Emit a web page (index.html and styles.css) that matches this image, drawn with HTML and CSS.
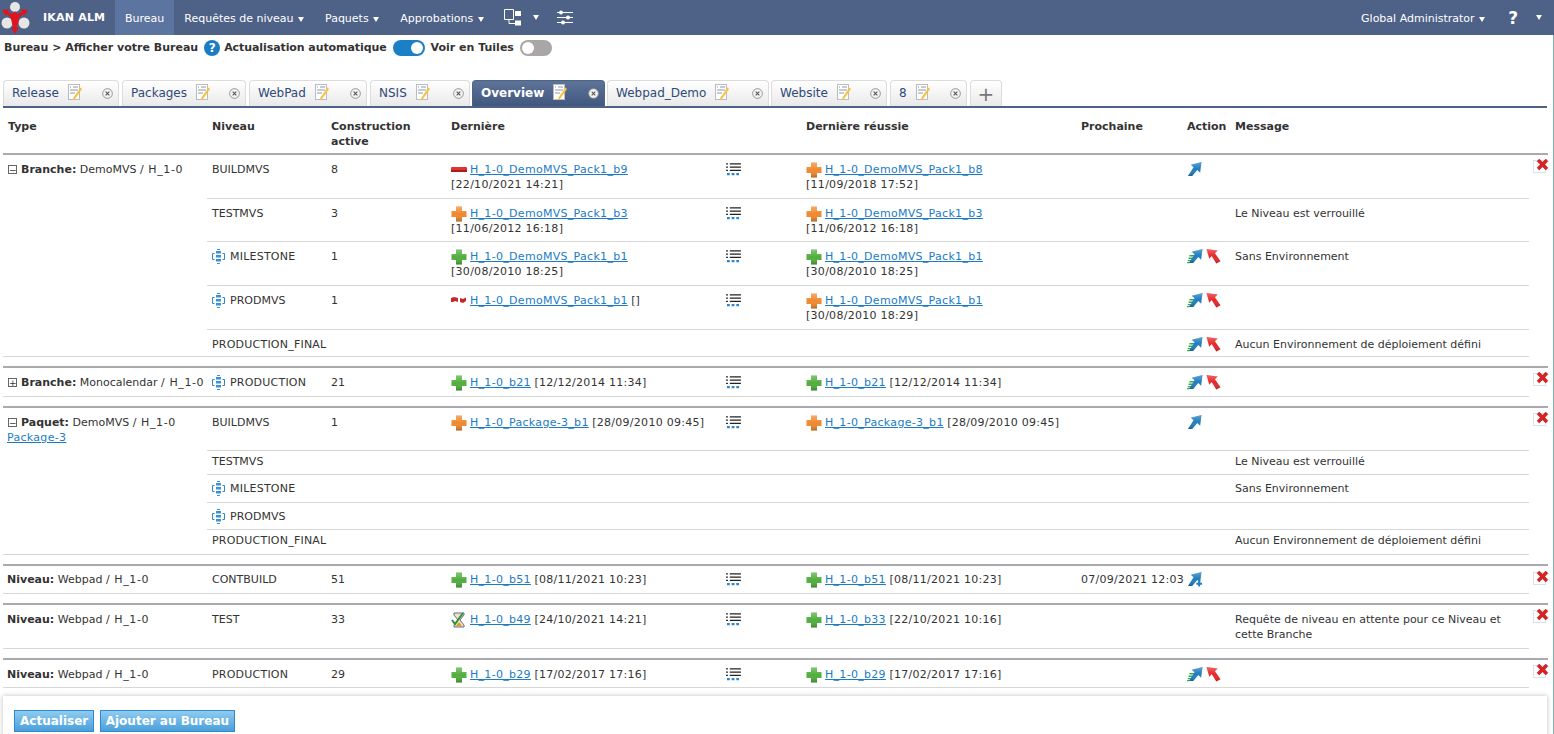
FILE: index.html
```html
<!DOCTYPE html>
<html lang="fr">
<head>
    <meta charset="UTF-8">
    <title>IKAN ALM - Bureau</title>
    <link rel="stylesheet" href="styles.css">
</head>
<body>

<svg class="defs" width="0" height="0">
    <defs>
        <linearGradient id="shade" x1="0" y1="0" x2="0" y2="1">
            <stop offset="0" stop-color="#fff" stop-opacity=".3"/>
            <stop offset=".5" stop-color="#fff" stop-opacity="0"/>
            <stop offset="1" stop-color="#000" stop-opacity=".25"/>
        </linearGradient>
    </defs>
    <symbol id="i-plus" viewBox="0 0 16 16"><path d="M5 .5h6V5h4.500v6H11v4.500H5V11H.5V5H5z" fill="currentColor"/><path d="M5 .5h6V5h4.500v6H11v4.500H5V11H.5V5H5z" fill="url(#shade)"/></symbol>
    <symbol id="i-minus" viewBox="0 0 16 16"><rect x="0" y="5" width="16" height="5" rx="1" fill="#e23232"/><rect x="0" y="8" width="16" height="2" fill="#a81c1c"/></symbol>
    <symbol id="i-broken" viewBox="0 0 16 16"><path d="M0 5l3-1 4 1v4l-3-1-2 1H0z" fill="#c62828"/><path d="M9 5l3 1 3-1.500V8l-3 2-3-1z" fill="#c62828"/></symbol>
    <symbol id="i-wait" viewBox="0 0 16 16"><path d="M3 1h10v2L9 8l4 5v2H3v-2l4-5-4-5z" fill="#f4e2bd" stroke="#5f7190"/><path d="M5 14l3-4 3 4z" fill="#e39a2c"/><path d="M1 8l3 4 8-11" fill="none" stroke="#2f8f3a" stroke-width="2"/></symbol>
    <symbol id="i-log" viewBox="0 0 16 14"><path d="M0 1h2M4 1h12M0 4.500h2M4 4.500h12M0 8h2M4 8h12" stroke="#222" stroke-width="1.400"/><path d="M1 12h3M6 12h3M11 12h3" stroke="#2d86c9" stroke-width="2.600"/></symbol>
    <symbol id="i-up" viewBox="0 0 16 16"><path d="M15.500 .5L14 12l-3-3-5.500 6.500H1L7 6 4 3.500z" fill="#1f7cc0"/><path d="M15.500 .5L14 12l-3-3-5.500 6.500H1L7 6 4 3.500z" fill="url(#shade)"/></symbol>
    <symbol id="i-up-plan" viewBox="0 0 16 16"><path d="M15.500 .5L14 12l-3-3-5.500 6.500H1L7 6 4 3.500z" fill="#1f7cc0"/><path d="M15.500 .5L14 12l-3-3-5.500 6.500H1L7 6 4 3.500z" fill="url(#shade)"/><path d="M10 13h6M13 10v6" stroke="#1f7cc0" stroke-width="2"/></symbol>
    <symbol id="i-down" viewBox="0 0 16 16"><path d="M.5 .5l12 1.500-3 3 6 8.500-4.500 2.500L6 8 3.500 11z" fill="#e82626"/><path d="M.5 .5l12 1.500-3 3 6 8.500-4.500 2.500L6 8 3.500 11z" fill="url(#shade)"/></symbol>
    <symbol id="i-fast" viewBox="0 0 10 10"><path d="M3 1h7M2 4h6M1 7h4M0 9.500h3" stroke="#2fb04a" stroke-width="1.700"/></symbol>
    <symbol id="i-milestone" viewBox="0 0 13 15"><path d="M2.500 4.500H.5v6h2M10.500 4.500h2v6h-2" fill="none" stroke="#2d86c9"/><path d="M5 0h3v1h-3zM4 2h5v2.500H4zM4 6h5v2.500H4zM4 10h5v2.500H4zM5 14h3v1H5z" fill="#3b93d6"/></symbol>
    <symbol id="i-note" viewBox="0 0 15 17"><rect x=".5" y=".5" width="11" height="15" fill="#fff" stroke="#b9bdc2"/><path d="M2 3h1M5 3h5M2 6h8M2 9h5" stroke="#8c98a6"/><path d="M14 5L7 15l-2 1 .5-2.500 7-10z" fill="#f5c242"/></symbol>
    <symbol id="i-close" viewBox="0 0 12 12"><circle cx="6" cy="6" r="5.300" fill="#f4f4f4" stroke="#8d8d8d"/><path d="M4 4l4 4M8 4l-4 4" stroke="#555" stroke-width="1.200"/></symbol>
    <symbol id="i-del" viewBox="0 0 12 12"><path d="M1 3l2-2 3 3 3-3 2 2-3 3 3 3-2 2-3-3-3 3-2-2 3-3z" fill="#dd2020" stroke="#a81818" stroke-width=".5"/></symbol>
</svg>

<header class="topbar">
    <a class="brand">
        <svg class="logo" viewBox="0 0 30 35" width="30" height="35">
            <circle cx="15" cy="7" r="5" fill="#e6e6e6"/>
            <circle cx="7" cy="23" r="5.500" fill="#e6e6e6"/>
            <circle cx="24" cy="23" r="5.500" fill="#e6e6e6"/>
            <path d="M2 10l7-.5-1 2.500 5 2 2-3 2 3 5-2-1-2.500 7 .5-4 6-1-2-4 4-1 6-2 3h3l-4 7-4-7h3l-2-3-1-6-4-4-1 2z" fill="#e0141c"/>
        </svg>
        <b>IKAN ALM</b>
    </a>
    <a class="nav-item active">Bureau</a>
    <a class="nav-item">Requêtes de niveau <i class="caret"></i></a>
    <a class="nav-item">Paquets <i class="caret"></i></a>
    <a class="nav-item">Approbations <i class="caret"></i></a>
    <svg class="nav-icon" viewBox="0 0 18 17" width="18" height="17"><path d="M.5.500h9v10h-9zM5 10.500v4h6" fill="none" stroke="#fff"/><path d="M11 2h6v5h-6zM11 11.500h6v5h-6z" fill="#fff"/></svg>
    <i class="caret caret-alone"></i>
    <svg class="nav-icon sliders" viewBox="0 0 16 15" width="16" height="15"><path d="M0 2.500h16M0 7.500h16M0 12.500h16" stroke="#fff"/><circle cx="4" cy="2.500" r="2" fill="#fff"/><circle cx="11" cy="7.500" r="2" fill="#fff"/><circle cx="6" cy="12.500" r="2" fill="#fff"/></svg>
    <span class="spacer"></span>
    <a class="nav-item user">Global Administrator <i class="caret"></i></a>
    <b class="help-mark">?</b>
    <i class="caret caret-end"></i>
</header>

<main class="page">
    <div class="crumbs">
        <b>Bureau &gt; Afficher votre Bureau</b>
        <span class="help-dot">?</span>
        <b class="auto">Actualisation automatique</b>
        <span class="toggle on"></span>
        <b>Voir en Tuiles</b>
        <span class="toggle"></span>
    </div>

    <ul class="tabs">
        <li class="tab t-release">Release<svg class="note"><use href="#i-note"/></svg><svg class="x"><use href="#i-close"/></svg></li>
        <li class="tab t-packages">Packages<svg class="note"><use href="#i-note"/></svg><svg class="x"><use href="#i-close"/></svg></li>
        <li class="tab t-webpad">WebPad<svg class="note"><use href="#i-note"/></svg><svg class="x"><use href="#i-close"/></svg></li>
        <li class="tab t-nsis">NSIS<svg class="note"><use href="#i-note"/></svg><svg class="x"><use href="#i-close"/></svg></li>
        <li class="tab current t-overview">Overview<svg class="note"><use href="#i-note"/></svg><svg class="x"><use href="#i-close"/></svg></li>
        <li class="tab t-demo">Webpad_Demo<svg class="note"><use href="#i-note"/></svg><svg class="x"><use href="#i-close"/></svg></li>
        <li class="tab t-website">Website<svg class="note"><use href="#i-note"/></svg><svg class="x"><use href="#i-close"/></svg></li>
        <li class="tab t-eight">8<svg class="note"><use href="#i-note"/></svg><svg class="x"><use href="#i-close"/></svg></li>
        <li class="tab add">+</li>
    </ul>

    <table class="desk">
        <colgroup>
            <col class="c-type"><col class="c-level"><col class="c-build"><col class="c-last"><col class="c-log"><col class="c-ok"><col class="c-next"><col class="c-action"><col class="c-msg"><col class="c-del">
        </colgroup>
        <thead>
            <tr>
                <th>Type</th><th>Niveau</th><th>Construction<br>active</th><th>Dernière</th><th></th><th>Dernière réussie</th><th>Prochaine</th><th>Action</th><th>Message</th><th></th>
            </tr>
        </thead>

        <tbody class="group">
            <tr class="h44">
                <td class="type" rowspan="5"><span class="tree">−</span><b>Branche:</b> DemoMVS <span class="ver">/ H_1-0</span></td>
                <td>BUILDMVS</td><td>8</td>
                <td><svg class="st"><use href="#i-minus"/></svg><a>H_1-0_DemoMVS_Pack1_b9</a><br><span class="date">[22/10/2021 14:21]</span></td>
                <td><svg class="log"><use href="#i-log"/></svg></td>
                <td><svg class="st orange"><use href="#i-plus"/></svg><a>H_1-0_DemoMVS_Pack1_b8</a><br><span class="date">[11/09/2018 17:52]</span></td>
                <td></td>
                <td><svg class="act"><use href="#i-up"/></svg></td>
                <td></td>
                <td class="del" rowspan="5"><span class="del-box"><svg><use href="#i-del"/></svg></span></td>
            </tr>
            <tr class="h43">
                <td>TESTMVS</td><td>3</td>
                <td><svg class="st orange"><use href="#i-plus"/></svg><a>H_1-0_DemoMVS_Pack1_b3</a><br><span class="date">[11/06/2012 16:18]</span></td>
                <td><svg class="log"><use href="#i-log"/></svg></td>
                <td><svg class="st orange"><use href="#i-plus"/></svg><a>H_1-0_DemoMVS_Pack1_b3</a><br><span class="date">[11/06/2012 16:18]</span></td>
                <td></td><td></td>
                <td>Le Niveau est verrouillé</td>
            </tr>
            <tr class="h44">
                <td><svg class="ms"><use href="#i-milestone"/></svg><span class="wide">MILESTONE</span></td><td>1</td>
                <td><svg class="st green"><use href="#i-plus"/></svg><a>H_1-0_DemoMVS_Pack1_b1</a><br><span class="date">[30/08/2010 18:25]</span></td>
                <td><svg class="log"><use href="#i-log"/></svg></td>
                <td><svg class="st green"><use href="#i-plus"/></svg><a>H_1-0_DemoMVS_Pack1_b1</a><br><span class="date">[30/08/2010 18:25]</span></td>
                <td></td>
                <td><svg class="fast"><use href="#i-fast"/></svg><svg class="act"><use href="#i-up"/></svg><svg class="act"><use href="#i-down"/></svg></td>
                <td>Sans Environnement</td>
            </tr>
            <tr class="h44">
                <td><svg class="ms"><use href="#i-milestone"/></svg>PRODMVS</td><td>1</td>
                <td><svg class="st"><use href="#i-broken"/></svg><a>H_1-0_DemoMVS_Pack1_b1</a> []</td>
                <td><svg class="log"><use href="#i-log"/></svg></td>
                <td><svg class="st orange"><use href="#i-plus"/></svg><a>H_1-0_DemoMVS_Pack1_b1</a><br><span class="date">[30/08/2010 18:29]</span></td>
                <td></td>
                <td><svg class="fast"><use href="#i-fast"/></svg><svg class="act"><use href="#i-up"/></svg><svg class="act"><use href="#i-down"/></svg></td>
                <td></td>
            </tr>
            <tr class="h27">
                <td><span class="wide">PRODUCTION_FINAL</span></td><td></td><td></td><td></td><td></td><td></td>
                <td><svg class="fast"><use href="#i-fast"/></svg><svg class="act"><use href="#i-up"/></svg><svg class="act"><use href="#i-down"/></svg></td>
                <td>Aucun Environnement de déploiement défini</td>
            </tr>
        </tbody>

        <tbody class="group">
            <tr class="h29">
                <td class="type"><span class="tree">+</span><b>Branche:</b> Monocalendar <span class="ver">/ H_1-0</span></td>
                <td><svg class="ms"><use href="#i-milestone"/></svg><span class="wide">PRODUCTION</span></td><td>21</td>
                <td><svg class="st green"><use href="#i-plus"/></svg><a>H_1-0_b21</a> <span class="date">[12/12/2014 11:34]</span></td>
                <td><svg class="log"><use href="#i-log"/></svg></td>
                <td><svg class="st green"><use href="#i-plus"/></svg><a>H_1-0_b21</a> <span class="date">[12/12/2014 11:34]</span></td>
                <td></td>
                <td><svg class="fast"><use href="#i-fast"/></svg><svg class="act"><use href="#i-up"/></svg><svg class="act"><use href="#i-down"/></svg></td>
                <td></td>
                <td class="del"><span class="del-box"><svg><use href="#i-del"/></svg></span></td>
            </tr>
        </tbody>

        <tbody class="group">
            <tr class="h43">
                <td class="type" rowspan="5"><span class="tree">−</span><b>Paquet:</b> DemoMVS <span class="ver">/ H_1-0</span><br><a>Package-3</a></td>
                <td>BUILDMVS</td><td>1</td>
                <td><svg class="st orange"><use href="#i-plus"/></svg><a>H_1-0_Package-3_b1</a> <span class="date">[28/09/2010 09:45]</span></td>
                <td><svg class="log"><use href="#i-log"/></svg></td>
                <td><svg class="st orange"><use href="#i-plus"/></svg><a>H_1-0_Package-3_b1</a> <span class="date">[28/09/2010 09:45]</span></td>
                <td></td>
                <td><svg class="act"><use href="#i-up"/></svg></td>
                <td></td>
                <td class="del" rowspan="5"><span class="del-box"><svg><use href="#i-del"/></svg></span></td>
            </tr>
            <tr class="h24 tight">
                <td>TESTMVS</td><td></td><td></td><td></td><td></td><td></td><td></td>
                <td>Le Niveau est verrouillé</td>
            </tr>
            <tr class="h28 snug">
                <td><svg class="ms"><use href="#i-milestone"/></svg><span class="wide">MILESTONE</span></td><td></td><td></td><td></td><td></td><td></td><td></td>
                <td>Sans Environnement</td>
            </tr>
            <tr class="h27 snug">
                <td><svg class="ms"><use href="#i-milestone"/></svg>PRODMVS</td><td></td><td></td><td></td><td></td><td></td><td></td><td></td>
            </tr>
            <tr class="h25 tight">
                <td><span class="wide">PRODUCTION_FINAL</span></td><td></td><td></td><td></td><td></td><td></td><td></td>
                <td>Aucun Environnement de déploiement défini</td>
            </tr>
        </tbody>

        <tbody class="group">
            <tr class="h28 snug">
                <td class="type"><b>Niveau:</b> Webpad <span class="ver">/ H_1-0</span></td>
                <td>CONTBUILD</td><td>51</td>
                <td><svg class="st green"><use href="#i-plus"/></svg><a>H_1-0_b51</a> <span class="date">[08/11/2021 10:23]</span></td>
                <td><svg class="log"><use href="#i-log"/></svg></td>
                <td><svg class="st green"><use href="#i-plus"/></svg><a>H_1-0_b51</a> <span class="date">[08/11/2021 10:23]</span></td>
                <td class="nowrap"><span class="date">07/09/2021 12:03</span></td>
                <td><svg class="act"><use href="#i-up-plan"/></svg></td>
                <td></td>
                <td class="del"><span class="del-box"><svg><use href="#i-del"/></svg></span></td>
            </tr>
        </tbody>

        <tbody class="group">
            <tr class="h44">
                <td class="type"><b>Niveau:</b> Webpad <span class="ver">/ H_1-0</span></td>
                <td>TEST</td><td>33</td>
                <td><svg class="st"><use href="#i-wait"/></svg><a>H_1-0_b49</a> <span class="date">[24/10/2021 14:21]</span></td>
                <td><svg class="log"><use href="#i-log"/></svg></td>
                <td><svg class="st green"><use href="#i-plus"/></svg><a>H_1-0_b33</a> <span class="date">[22/10/2021 10:16]</span></td>
                <td></td><td></td>
                <td>Requête de niveau en attente pour ce Niveau et cette Branche</td>
                <td class="del"><span class="del-box"><svg><use href="#i-del"/></svg></span></td>
            </tr>
        </tbody>

        <tbody class="group">
            <tr class="h28">
                <td class="type"><b>Niveau:</b> Webpad <span class="ver">/ H_1-0</span></td>
                <td><span class="wide">PRODUCTION</span></td><td>29</td>
                <td><svg class="st green"><use href="#i-plus"/></svg><a>H_1-0_b29</a> <span class="date">[17/02/2017 17:16]</span></td>
                <td><svg class="log"><use href="#i-log"/></svg></td>
                <td><svg class="st green"><use href="#i-plus"/></svg><a>H_1-0_b29</a> <span class="date">[17/02/2017 17:16]</span></td>
                <td></td>
                <td><svg class="fast"><use href="#i-fast"/></svg><svg class="act"><use href="#i-up"/></svg><svg class="act"><use href="#i-down"/></svg></td>
                <td></td>
                <td class="del"><span class="del-box"><svg><use href="#i-del"/></svg></span></td>
            </tr>
        </tbody>
    </table>

    <div class="footer-bar">
        <button type="button" class="btn">Actualiser</button>
        <button type="button" class="btn">Ajouter au Bureau</button>
    </div>
</main>

</body>
</html>
```

FILE: styles.css
```css
html, body {
    margin: 0;
    height: 734px;
    overflow: hidden;
}
body {
    font-family: "DejaVu Sans", Verdana, sans-serif;
    font-size: 11px;
    color: #333;
    background: #fff;
}
.defs {
    display: block;
    height: 0;
}

/* top bar */
.topbar {
    display: flex;
    align-items: center;
    height: 35px;
    background: #4e6187;
    color: #fff;
}
.brand {
    display: flex;
    align-items: center;
    width: 115px;
    box-sizing: border-box;
}
.brand b {
    margin-left: 13px;
    letter-spacing: .2px;
}
.nav-item {
    display: block;
    height: 35px;
    line-height: 37px;
    padding: 0 10px;
}
.nav-item.active {
    background: #5c75a0;
}
.caret {
    display: inline-block;
    width: 0;
    height: 0;
    margin: 0 1px;
    border-left: 3.5px solid transparent;
    border-right: 3.5px solid transparent;
    border-top: 5px solid #fff;
    vertical-align: 0;
}
.nav-icon {
    margin-left: 9px;
}
.caret-alone {
    margin-left: 11px;
}
.sliders {
    margin-left: 17px;
}
.spacer {
    flex: 1;
}
.help-mark {
    font-size: 17px;
    margin-left: 12px;
}
.caret-end {
    margin: 0 12px 0 18px;
}

/* page */
.page {
    height: 699px;
    border-right: 1px solid #7fb3ac;
    position: relative;
}
.crumbs {
    display: flex;
    align-items: center;
    height: 25px;
    padding-left: 4px;
    color: #333;
}
.auto {
    letter-spacing: -.08px;
}
.help-dot {
    width: 16px;
    height: 16px;
    margin: 0 4px 0 6px;
    border-radius: 50%;
    background: #1b7cc4;
    color: #fff;
    font-weight: bold;
    font-size: 12px;
    line-height: 16px;
    text-align: center;
}
.toggle {
    position: relative;
    width: 32px;
    height: 16px;
    margin: 0 6px;
    border-radius: 8px;
    background: #aaa6a6;
}
.toggle::after {
    content: "";
    position: absolute;
    top: 2px;
    left: 2px;
    width: 12px;
    height: 12px;
    border-radius: 50%;
    background: #fff;
}
.toggle.on {
    background: #1b7fc6;
}
.toggle.on::after {
    left: 18px;
}

/* tabs */
.tabs {
    display: flex;
    gap: 3px;
    list-style: none;
    margin: 20px 6px 0 3px;
    padding: 0;
    height: 26px;
    border-bottom: 2px solid #4e6187;
}
.tab {
    position: relative;
    display: flex;
    align-items: center;
    box-sizing: border-box;
    height: 26px;
    padding: 0 0 2px 8px;
    border: 1px solid #dcdcdc;
    border-bottom: 0;
    border-radius: 4px 4px 0 0;
    background: linear-gradient(#fff, #e9e9e9);
    color: #2d4a78;
    font-size: 12px;
}
.tab .note {
    width: 15px;
    height: 17px;
    margin-left: 9px;
}
.tab .x {
    position: absolute;
    right: 5px;
    top: 7px;
    width: 11px;
    height: 11px;
}
.tab.current {
    background: linear-gradient(#5e7398, #42577e);
    border-color: #4e6187;
    color: #fff;
    font-weight: bold;
}
.t-release { width: 116px; }
.t-packages { width: 124px; }
.t-webpad { width: 118px; }
.t-nsis { width: 100px; margin-right: -1px; }
.t-overview { width: 133px; margin-right: -1px; }
.t-demo { width: 162px; margin-right: -1px; }
.t-website { width: 116px; }
.t-eight { width: 77px; }
.tab.add {
    width: 32px;
    padding: 0;
    justify-content: center;
    color: #777;
    font-size: 20px;
}

/* desktop table */
.desk {
    width: 1545px;
    margin-left: 3px;
    table-layout: fixed;
    border-collapse: collapse;
}
.c-type { width: 204px; }
.c-level { width: 119px; }
.c-build { width: 120px; }
.c-last { width: 276px; }
.c-log { width: 79px; }
.c-ok { width: 275px; }
.c-next { width: 106px; }
.c-action { width: 48px; }
.c-msg { width: 299px; }
.c-del { width: 19px; }

.desk th {
    height: 46px;
    box-sizing: border-box;
    padding: 11px 4px 0 5px;
    text-align: left;
    vertical-align: top;
    line-height: 15px;
    color: #333;
}
.desk td {
    padding: 7px 4px 0 5px;
    vertical-align: top;
    line-height: 15px;
    border-bottom: 1px solid #d8d8d8;
}
.desk thead th {
    border-bottom: 2px solid #a9a9ae;
}
.desk td.type {
    padding: 7px 0 0 4px;
    white-space: nowrap;
}
.desk td.del {
    border-bottom: 0;
    padding: 5px 0 0 4px;
}
.desk .tight td {
    padding-top: 3px;
}
.desk .snug td {
    padding-top: 6px;
}
/* every block after the first: white gap and a thick rule on top */
.group + .group::before {
    content: "";
    display: table-row;
    height: 11px;
}
.group + .group tr:first-child td {
    border-top: 2px solid #a9a9ae;
}
.h24 { height: 24px; }
.h25 { height: 25px; }
.h27 { height: 27px; }
.h28 { height: 28px; }
.h29 { height: 29px; }
.h43 { height: 43px; }
.h44 { height: 44px; }

.desk a {
    color: #1b7cc4;
    text-decoration: underline;
    letter-spacing: .3px;
}
.date {
    letter-spacing: .28px;
}
.ver {
    letter-spacing: .6px;
}
.wide {
    letter-spacing: .22px;
}
.st {
    width: 16px;
    height: 16px;
    margin: -3px 3px -3px 0;
    vertical-align: -2px;
}
.orange { color: #f0882c; }
.green { color: #4fae3c; }
.log {
    display: block;
    width: 15px;
    height: 13px;
    margin: 1px 0 0 -1px;
}
.ms {
    width: 13px;
    height: 15px;
    margin: -3px 5px -3px 0;
    vertical-align: -1px;
}
.act {
    width: 15px;
    height: 16px;
    margin: -3px 0;
    vertical-align: -1px;
}
.act + .act {
    margin-left: 3px;
}
.fast {
    width: 8px;
    height: 10px;
    margin: -3px -7px -3px 0;
    vertical-align: -1px;
}
.tree {
    display: inline-block;
    width: 9px;
    height: 9px;
    margin: 0 4px 0 1px;
    border: 1px solid #666;
    font-size: 9px;
    line-height: 8px;
    text-align: center;
    box-sizing: border-box;
}
.del-box {
    position: relative;
    display: block;
    width: 13px;
    height: 13px;
    border: 1px solid #d5e3ef;
    box-sizing: border-box;
}
.del-box svg {
    position: absolute;
    left: 2px;
    top: -3px;
    width: 13px;
    height: 13px;
}
.nowrap {
    white-space: nowrap;
}

/* bottom buttons */
.footer-bar {
    position: absolute;
    left: 3px;
    right: 6px;
    top: 661px;
    height: 60px;
    padding: 14px 0 0 11px;
    box-sizing: border-box;
    background: #fff;
    box-shadow: 0 0 5px rgba(0,0,0,.25);
}
.btn {
    height: 22px;
    padding: 0 5px;
    margin-right: 2px;
    border: 1px solid #2f8ccc;
    background: linear-gradient(#8fcbf0, #4a9fdc);
    color: #fff;
    font: bold 12px "DejaVu Sans", Verdana, sans-serif;
}
```
